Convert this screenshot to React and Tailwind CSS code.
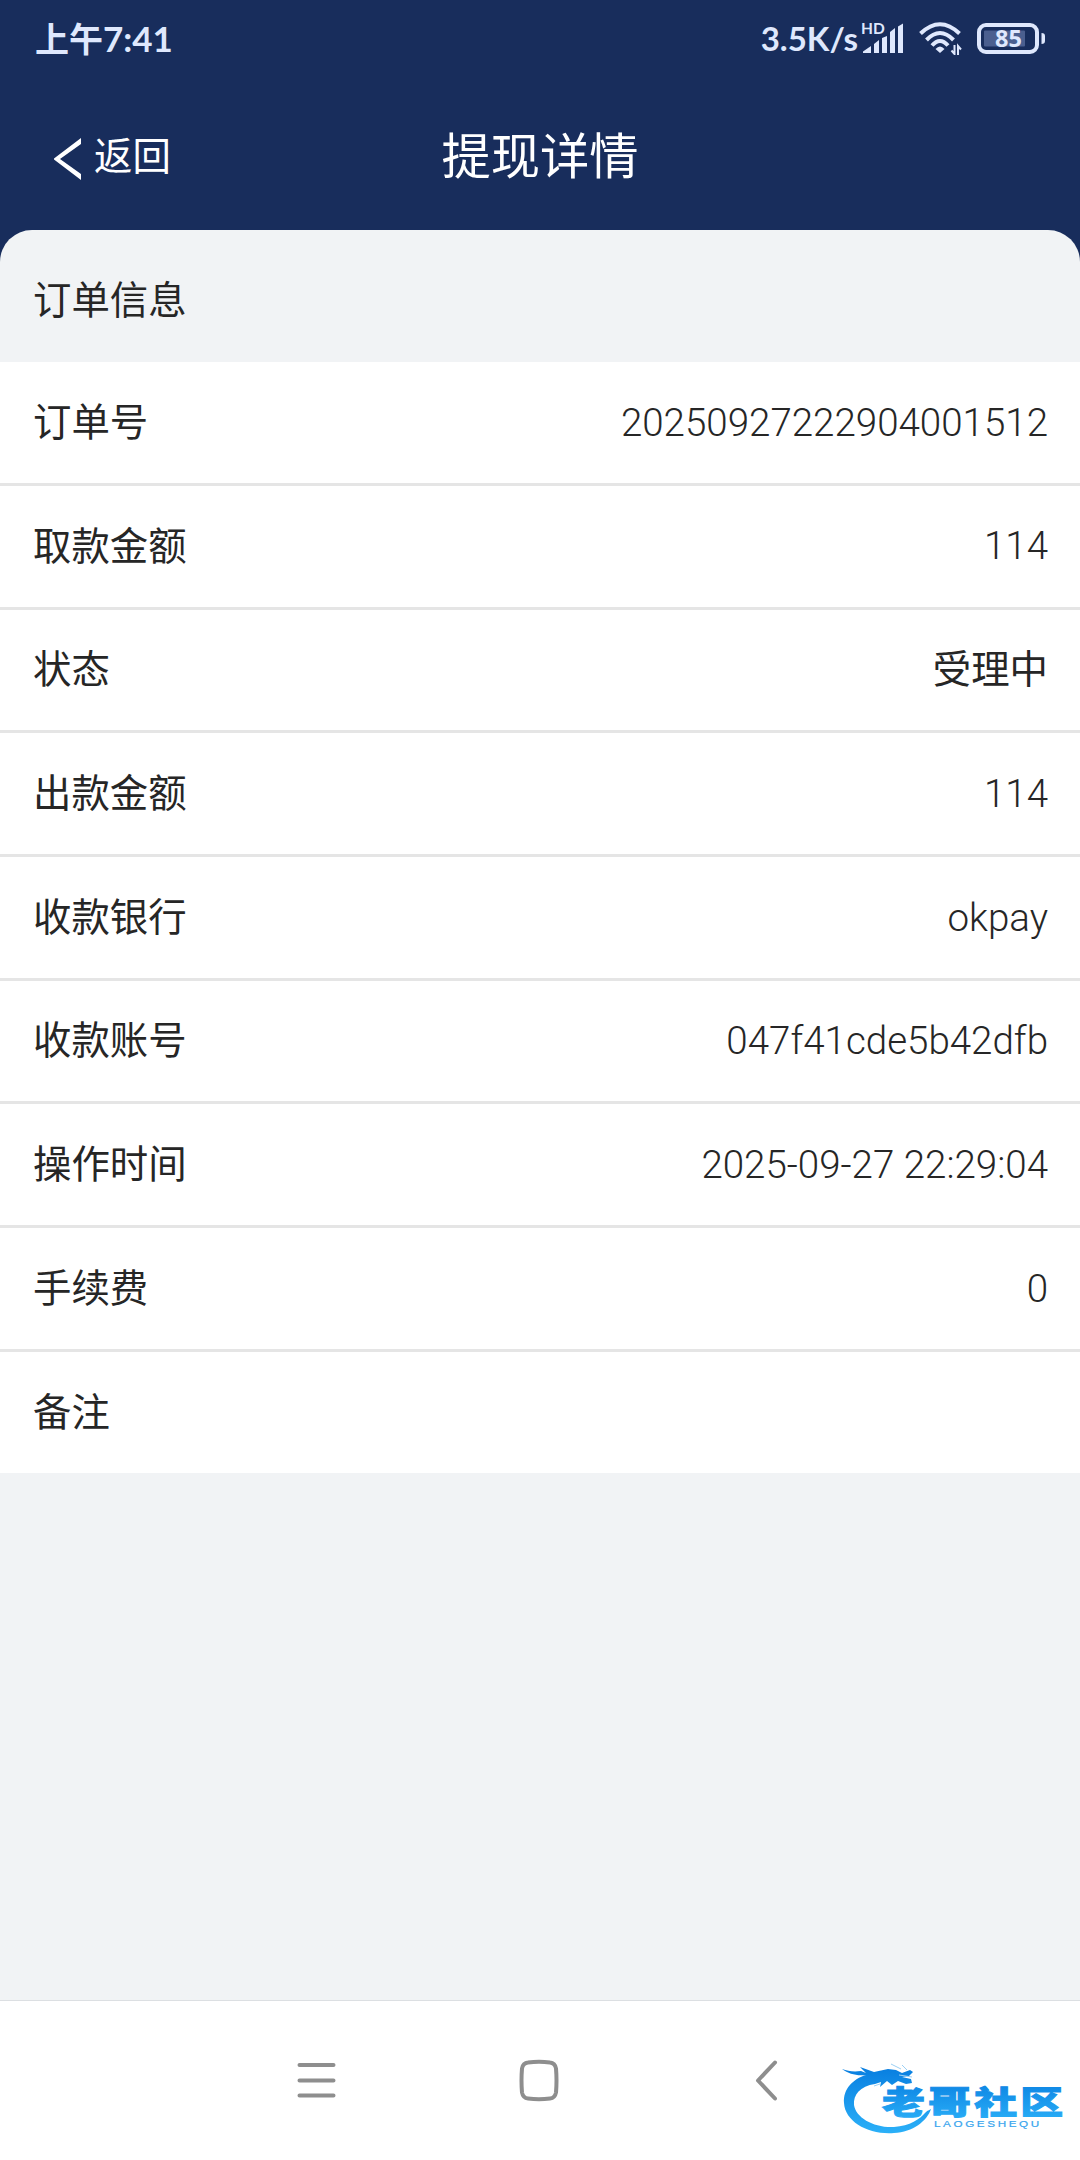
import React from 'react';

const rows = [
  { label: '订单号', value: '20250927222904001512' },
  { label: '取款金额', value: '114' },
  { label: '状态', value: '受理中', isText: true },
  { label: '出款金额', value: '114' },
  { label: '收款银行', value: 'okpay' },
  { label: '收款账号', value: '047f41cde5b42dfb' },
  { label: '操作时间', value: '2025-09-27 22:29:04' },
  { label: '手续费', value: '0' },
  { label: '备注', value: '' },
];

function SignalIcon() {
  return (
    <div className="relative w-[42px] h-[32px]">
      <span className="absolute -left-[2px] -top-px font-[Lato,sans-serif] font-bold text-[15.5px] leading-[14px]">HD</span>
      <svg className="w-[42px] h-[32px]" viewBox="0 0 42 32" fill="currentColor">
        <path d="M0 31V29.5L8 24V31Z" />
        <path d="M11 31V22L16 18V31Z" />
        <path d="M19 31V16L24 14V31Z" />
        <path d="M27 31V10L32 6V31Z" />
        <path d="M35 31V4.500L40 1.500V31Z" />
      </svg>
    </div>
  );
}

function WifiIcon() {
  return (
    <svg className="w-[44px] h-[34px]" viewBox="0 0 44 34" fill="none" stroke="currentColor" strokeWidth="4">
      <path d="M1.500 12.500Q21 -6 40.500 12.500" />
      <path d="M7.500 19Q21 5 34.500 19" />
      <path d="M13 24.500Q21 15.500 29 24.500" />
      <path d="M16.500 28Q21 23 25.500 28L21 32Z" fill="currentColor" stroke="none" />
      <path d="M35.500 24V33L32.500 29.500M39 34V25L42 28.500" strokeWidth="2" />
    </svg>
  );
}

function BatteryIcon() {
  return (
    <svg className="w-[70px] h-[32px]" viewBox="0 0 70 32">
      <rect x="2" y="3" width="58" height="27" rx="7" fill="none" stroke="currentColor" strokeWidth="4" />
      <rect x="7" y="8.500" width="41" height="16" rx="1" fill="#4b5f8f" />
      <path d="M64.500 11Q68 11 68 14V19Q68 22 64.500 22Z" fill="currentColor" />
      <text x="31.500" y="25" fontSize="23.500" fontWeight="700" textAnchor="middle" fill="currentColor" fontFamily="'Open Sans', sans-serif">85</text>
    </svg>
  );
}

function StatusBar() {
  return (
    <div className="h-[76px] flex items-center justify-between pl-[35px] pr-[33px] text-[#dfe8fd]">
      <div className="flex items-center font-bold leading-none">
        <span className="font-['Noto_Sans_CJK_SC',sans-serif] text-[34px]">上午</span>
        <span className="font-[Lato,sans-serif] text-[35px]">7:41</span>
      </div>
      <div className="flex items-center">
        <span className="font-[Lato,sans-serif] font-bold text-[33px] leading-none mr-[5px]">3.5K/s</span>
        <SignalIcon />
        <div className="ml-[14px]"><WifiIcon /></div>
        <div className="ml-[14px]"><BatteryIcon /></div>
      </div>
    </div>
  );
}

function Header() {
  return (
    <div className="h-[154px] grid grid-cols-3 text-white">
      <button className="flex items-start pl-[52px] pt-[62px] text-[38.4px] leading-[38px]">
        <svg className="w-[30px] h-[42px] mr-[12px]" viewBox="0 0 30 42" fill="currentColor">
          <path d="M29 0V6L8 21L29 36V42L2 21.500V20.500Z" />
        </svg>
        <span>返回</span>
      </button>
      <h1 className="pt-[57px] text-center text-[49.300px] leading-[49px]">提现详情</h1>
    </div>
  );
}

function OrderInfo() {
  return (
    <div className="flex-1 bg-[#f1f3f5] rounded-t-[32px] text-[#262626] text-[38.4px]">
      <div className="h-[132px] px-[33px] flex items-center pt-[9px]">订单信息</div>
      <div className="bg-white">
        {rows.map((row) => (
          <div
            key={row.label}
            className="h-[123.700px] pl-[33px] pr-[32px] flex items-center justify-between border-b-[3px] border-[#e5e5e5] first:h-[124px] last:border-b-0 last:h-[121px]"
          >
            <span>{row.label}</span>
            <span className={row.isText ? 'font-normal' : 'font-light text-[38.500px]'}>{row.value}</span>
          </div>
        ))}
      </div>
    </div>
  );
}

// blue dragon ring with the site name
function Logo() {
  return (
    <svg className="w-[226px] h-[76px]" viewBox="0 0 226 76">
      <defs>
        <linearGradient id="logoBlue" x1="0" y1="0" x2="0" y2="1">
          <stop offset="0" stopColor="#087ee0" />
          <stop offset="1" stopColor="#2bb0f8" />
        </linearGradient>
      </defs>
      <path
        d="M1 8C7 10 12 11 20 10L25 12L19 6L33 11L47 8L55 9L61 12L69 9L72 11L68 15L61 16L70 18L71 22L65 23L57 20L51 24L46 20L39 26L40 21L34 23C19 25 12 34 13 44C15 57 33 67 53 66C69 65 79 58 85 51C87 49 89 49 90 48C86 60 72 71 53 72C28 74 4 61 3 42C2 28 12 18 25 14C15 15 8 13 1 8Z"
        fill="url(#logoBlue)"
      />
      <path d="M60 8L50 3M66 9L61 4M39 23L33 25M71 16L58 14" stroke="#9bd0f4" strokeWidth="1" />
      <g transform="translate(41 52.500) scale(1.340 1)">
        <text x="0" y="0" fontSize="32" fontWeight="900" letterSpacing="2.400" fill="url(#logoBlue)" stroke="url(#logoBlue)" strokeWidth="1" fontFamily="'Noto Sans CJK SC', sans-serif">老哥社区</text>
      </g>
      <g transform="translate(93 65.500) scale(1.300 1)">
        <text x="0" y="0" fontSize="9" letterSpacing="2" fill="#38a5ee" stroke="#38a5ee" strokeWidth="0.200" fontFamily="'Liberation Sans', sans-serif">LAOGESHEQU</text>
      </g>
    </svg>
  );
}

function NavBar() {
  return (
    <div className="relative h-[160px] bg-white border-t border-[#dcdfe2] flex items-center text-[#8e8e8e]">
      <svg className="w-[42px] h-[44px] ml-[296px]" viewBox="0 0 42 44" stroke="currentColor" strokeWidth="4" strokeLinecap="round">
        <path d="M3.500 6H37.500M3.500 21.500H37.500M3.500 36.500H37.500" />
      </svg>
      <svg className="w-[42px] h-[44px] ml-[180px]" viewBox="0 0 42 44" fill="none" stroke="currentColor" strokeWidth="4">
        <path d="M10 3.500Q21 2 32 3.500Q37 4 38 9.500Q39 21.500 38 33.500Q37 39 32 39.500Q21 41 10 39.500Q5 39 4 33.500Q3 21.500 4 9.500Q5 4 10 3.500Z" />
      </svg>
      <svg className="w-[30px] h-[44px] ml-[190px]" viewBox="0 0 30 44" fill="none" stroke="currentColor" strokeWidth="4" strokeLinecap="round" strokeLinejoin="round">
        <path d="M25 3.500L8 21.500L25 39.500" />
      </svg>
      <div className="absolute left-[841px] top-[60px]"><Logo /></div>
    </div>
  );
}

function App() {
  return (
    <div className="w-[1080px] h-[2160px] flex flex-col bg-[#182d5c] overflow-hidden font-[Roboto,'Noto_Sans_CJK_SC',sans-serif]">
      <StatusBar />
      <Header />
      <OrderInfo />
      <NavBar />
    </div>
  );
}

export default App;
